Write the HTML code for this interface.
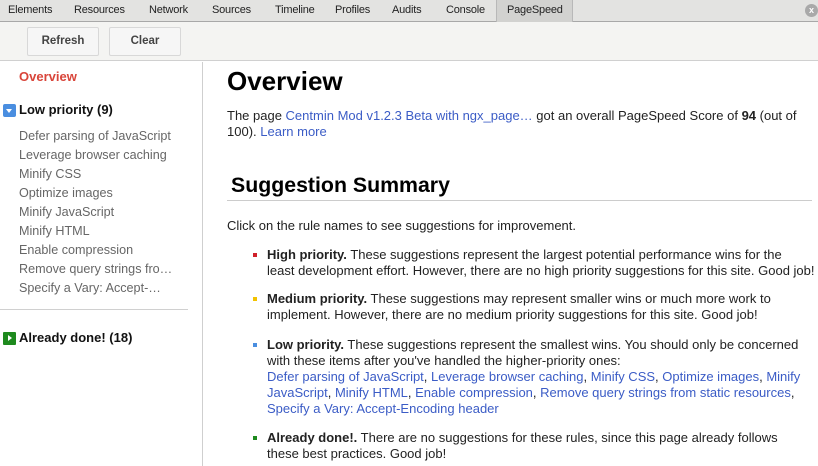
<!DOCTYPE html>
<html><head><meta charset="utf-8"><style>
*{margin:0;padding:0;box-sizing:border-box}
body{width:818px;height:466px;overflow:hidden;background:#fff;font-family:"Liberation Sans",Arial,sans-serif;font-size:13px;color:#222;position:relative}
.a{position:absolute;white-space:nowrap}
#tabs{position:absolute;left:0;top:0;width:818px;height:22px;background:#e3e3e1;border-bottom:1px solid #a8a8a8}
.t{position:absolute;top:4px;font-size:11px;color:#222;letter-spacing:-0.2px}
#sel{position:absolute;left:496px;top:0;width:77px;height:22px;background:#d2d2d0;border-left:1px solid #b8b8b8;border-right:1px solid #b8b8b8}
#bar{position:absolute;left:0;top:22px;width:818px;height:39px;background:#f4f4f2;border-bottom:1px solid #d0d0d0}
.btn{position:absolute;top:5px;height:29px;width:72px;border:1px solid #d8d8d8;background:#f6f6f6;border-radius:2px;text-align:center;line-height:27px;font-weight:bold;font-size:11.5px;color:#444}
#left{position:absolute;left:0;top:62px;width:203px;height:404px;border-right:1px solid #cfcfcf}
.li{position:absolute;left:19px;color:#666;font-size:12.6px}
.lk{color:#3b5cc6;text-decoration:none}
.p{position:absolute;left:267px;font-size:13px;line-height:16px;white-space:nowrap}
.sq{position:absolute;left:253px;width:4px;height:4px}
</style></head><body>
<div id="tabs">
<div id="sel"></div>
<span class="t" style="left:8px">Elements</span>
<span class="t" style="left:74px">Resources</span>
<span class="t" style="left:149px">Network</span>
<span class="t" style="left:212px">Sources</span>
<span class="t" style="left:275px">Timeline</span>
<span class="t" style="left:335px">Profiles</span>
<span class="t" style="left:392px">Audits</span>
<span class="t" style="left:446px">Console</span>
<span class="t" style="left:507px">PageSpeed</span>
<div style="position:absolute;left:805px;top:4px;width:13px;height:13px;border-radius:50%;background:#a9a9a9;color:#fff;font-size:9px;font-weight:bold;text-align:center;line-height:13px">x</div>
</div>
<div id="bar">
<div class="btn" style="left:27px">Refresh</div>
<div class="btn" style="left:109px">Clear</div>
</div>
<div id="left">
<div class="a" style="left:19px;top:7px;color:#d9453a;font-size:13px;font-weight:bold">Overview</div>
<div class="a" style="left:3px;top:42px;width:13px;height:13px;background:#4a8ee0;border-radius:2px"><div style="position:absolute;left:3px;top:5px;border-left:3.5px solid transparent;border-right:3.5px solid transparent;border-top:4px solid #fff"></div></div>
<div class="a" style="left:19px;top:40px;font-size:13px;font-weight:bold;color:#111">Low priority (9)</div>
<div class="a li" style="top:67px">Defer parsing of JavaScript</div>
<div class="a li" style="top:86px">Leverage browser caching</div>
<div class="a li" style="top:105px">Minify CSS</div>
<div class="a li" style="top:124px">Optimize images</div>
<div class="a li" style="top:143px">Minify JavaScript</div>
<div class="a li" style="top:162px">Minify HTML</div>
<div class="a li" style="top:181px">Enable compression</div>
<div class="a li" style="top:200px">Remove query strings fro…</div>
<div class="a li" style="top:219px">Specify a Vary: Accept-…</div>
<div class="a" style="left:0;top:247px;width:188px;height:1px;background:#d0d0d0"></div>
<div class="a" style="left:3px;top:270px;width:13px;height:13px;background:#1e8a1e;border-radius:1px"><div style="position:absolute;left:5px;top:3px;border-top:3.5px solid transparent;border-bottom:3.5px solid transparent;border-left:4px solid #fff"></div></div>
<div class="a" style="left:19px;top:268px;font-size:13px;font-weight:bold;color:#111">Already done! (18)</div>
</div>
<div class="a" style="left:227px;top:66px;font-size:26px;font-weight:bold;color:#000">Overview</div>
<div class="a" style="left:227px;top:108px;line-height:16px;font-size:13px">The page <span class="lk">Centmin Mod v1.2.3 Beta with ngx_page…</span> got an overall PageSpeed Score of <b>94</b> (out of<br>100). <span class="lk">Learn more</span></div>
<div class="a" style="left:231px;top:173px;font-size:21.3px;font-weight:bold;color:#000">Suggestion Summary</div>
<div class="a" style="left:227px;top:200px;width:585px;height:1px;background:#ccc"></div>
<div class="a" style="left:227px;top:218px">Click on the rule names to see suggestions for improvement.</div>
<div class="sq" style="top:253px;background:#d0202a"></div>
<div class="p" style="top:247px"><b>High priority.</b> These suggestions represent the largest potential performance wins for the<br>least development effort. However, there are no high priority suggestions for this site. Good job!</div>
<div class="sq" style="top:297px;background:#f2c200"></div>
<div class="p" style="top:291px"><b>Medium priority.</b> These suggestions may represent smaller wins or much more work to<br>implement. However, there are no medium priority suggestions for this site. Good job!</div>
<div class="sq" style="top:343px;background:#4a8ee0"></div>
<div class="p" style="top:337px"><b>Low priority.</b> These suggestions represent the smallest wins. You should only be concerned<br>with these items after you've handled the higher-priority ones:<br><span class="lk">Defer parsing of JavaScript</span>, <span class="lk">Leverage browser caching</span>, <span class="lk">Minify CSS</span>, <span class="lk">Optimize images</span>, <span class="lk">Minify</span><br><span class="lk">JavaScript</span>, <span class="lk">Minify HTML</span>, <span class="lk">Enable compression</span>, <span class="lk">Remove query strings from static resources</span>,<br><span class="lk">Specify a Vary: Accept-Encoding header</span></div>
<div class="sq" style="top:436px;background:#1e8a1e"></div>
<div class="p" style="top:430px"><b>Already done!.</b> There are no suggestions for these rules, since this page already follows<br>these best practices. Good job!</div>
</body></html>
